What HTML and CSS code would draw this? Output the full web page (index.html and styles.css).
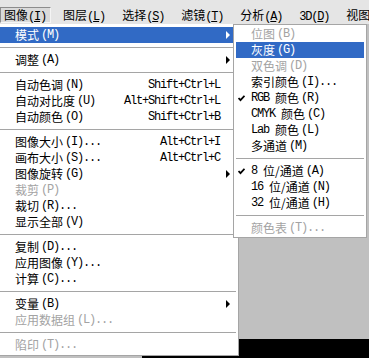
FILE: index.html
```html
<!DOCTYPE html>
<html lang="zh-CN">
<head>
  <meta charset="UTF-8" />
  <title>图像菜单</title>
  <link rel="stylesheet" href="styles.css">
</head>
<body>
  <div class="menubar">
    <span class="top-item open">图像<span class="en">(<u>I</u>)</span></span>
    <span class="top-item">图层<span class="en">(<u>L</u>)</span></span>
    <span class="top-item">选择<span class="en">(<u>S</u>)</span></span>
    <span class="top-item">滤镜<span class="en">(<u>T</u>)</span></span>
    <span class="top-item">分析<span class="en">(<u>A</u>)</span></span>
    <span class="top-item"><span class="en">3D(<u>D</u>)</span></span>
    <span class="top-item">视图</span>
  </div>

  <!-- grey workspace with the black document peeking out -->
  <div class="workspace">
    <div class="canvas"></div>
  </div>

  <!-- Image menu -->
  <div class="menu main-menu">
    <div class="item active">模式<span class="acc">(M)</span><i class="arrow"></i></div>
    <div class="sep"></div>
    <div class="item">调整<span class="acc">(A)</span><i class="arrow"></i></div>
    <div class="sep"></div>
    <div class="item">自动色调<span class="acc">(N)</span><span class="key">Shift+Ctrl+L</span></div>
    <div class="item">自动对比度<span class="acc">(U)</span><span class="key">Alt+Shift+Ctrl+L</span></div>
    <div class="item">自动颜色<span class="acc">(O)</span><span class="key">Shift+Ctrl+B</span></div>
    <div class="sep"></div>
    <div class="item">图像大小<span class="acc">(I)...</span><span class="key">Alt+Ctrl+I</span></div>
    <div class="item">画布大小<span class="acc">(S)...</span><span class="key">Alt+Ctrl+C</span></div>
    <div class="item">图像旋转<span class="acc">(G)</span><i class="arrow"></i></div>
    <div class="item disabled">裁剪<span class="acc">(P)</span></div>
    <div class="item">裁切<span class="acc">(R)...</span></div>
    <div class="item">显示全部<span class="acc">(V)</span></div>
    <div class="sep"></div>
    <div class="item">复制<span class="acc">(D)...</span></div>
    <div class="item">应用图像<span class="acc">(Y)...</span></div>
    <div class="item">计算<span class="acc">(C)...</span></div>
    <div class="sep"></div>
    <div class="item">变量<span class="acc">(B)</span><i class="arrow"></i></div>
    <div class="item disabled">应用数据组<span class="acc">(L)...</span></div>
    <div class="sep"></div>
    <div class="item disabled">陷印<span class="acc">(T)...</span></div>
  </div>

  <!-- Mode submenu -->
  <div class="menu submenu">
    <div class="item disabled">位图<span class="acc">(B)</span></div>
    <div class="item active">灰度<span class="acc">(G)</span></div>
    <div class="item disabled">双色调<span class="acc">(D)</span></div>
    <div class="item">索引颜色<span class="acc">(I)...</span></div>
    <div class="item checked"><span class="check"><svg width="7" height="7" viewBox="0 0 7 7"><polyline points="0.5,3 2.5,5.2 6.5,0.8" fill="none" stroke="#000" stroke-width="1.8"/></svg></span><span class="en">RGB </span>颜色<span class="acc">(R)</span></div>
    <div class="item"><span class="en">CMYK </span>颜色<span class="acc">(C)</span></div>
    <div class="item"><span class="en">Lab </span>颜色<span class="acc">(L)</span></div>
    <div class="item">多通道<span class="acc">(M)</span></div>
    <div class="sep"></div>
    <div class="item checked"><span class="check"><svg width="7" height="7" viewBox="0 0 7 7"><polyline points="0.5,3 2.5,5.2 6.5,0.8" fill="none" stroke="#000" stroke-width="1.8"/></svg></span><span class="en">8 </span>位/通道<span class="acc">(A)</span></div>
    <div class="item"><span class="en">16 </span>位/通道<span class="acc">(N)</span></div>
    <div class="item"><span class="en">32 </span>位/通道<span class="acc">(H)</span></div>
    <div class="sep"></div>
    <div class="item disabled">颜色表<span class="acc">(T)...</span></div>
  </div>
</body>
</html>
```

FILE: styles.css
```css
html, body {
  margin: 0;
  overflow: hidden;
}
body {
  position: relative;
  height: 358px;
  background: #c0c0c0;
  color: #000;
  font: 12px/16px "Noto Sans CJK SC", sans-serif;
}

/* latin runs look like the old bitmap font: 6px per char */
.en,
.acc,
.key {
  font-family: "Liberation Mono", monospace;
  font-size: 12px;
  letter-spacing: -1.2px;
}
.acc {
  margin-left: 2px;
}

/* top menu bar */
.menubar {
  display: flex;
  gap: 8px;
  height: 24px;
  padding-top: 7px;
  box-sizing: border-box;
  background: #e5e5e5;
  white-space: nowrap;
  overflow: hidden;
}
.top-item {
  height: 16px;
  line-height: 14px;
  padding: 0 4px 0 3px;
  border: 1px solid transparent;
  box-sizing: border-box;
}
.top-item.open {
  border-color: #8c8c8c #f4f4f4 #f4f4f4 #8c8c8c;
  background: #dadada;
}

.workspace {
  height: 334px;
  padding: 315px 0 0 142px;
  box-sizing: border-box;
}
.canvas {
  height: 100%;
  background: #000;
}

/* dropdowns */
.menu {
  position: absolute;
  top: 24px;
  background: #fff;
  border: 1px solid #a5a5a5;
  box-sizing: border-box;
}
.main-menu {
  left: -3px;
  width: 242px;
  padding: 2px;
  border-top-color: #fff;
}
.submenu {
  left: 233px;
  width: 134px;
  padding: 1px 2px;
}

.item {
  display: flex;
  align-items: center;
  height: 16px;
  padding: 0 6px 0 15px;
  white-space: pre;
}
.item.active {
  background: #316ac5;
  color: #fff;
}
.item.disabled {
  color: #a3a3a3;
}
.key {
  margin-left: auto;
  margin-right: 10px;
}
.arrow {
  margin-left: auto;
  width: 0;
  height: 0;
  border-left: 4px solid currentColor;
  border-top: 4px solid transparent;
  border-bottom: 4px solid transparent;
}
.sep {
  height: 1px;
  margin: 4px 0;
  background: #a5a5a5;
}

.submenu .item.checked {
  padding-left: 2px;
}
.check {
  display: flex;
  width: 13px;
}
```
